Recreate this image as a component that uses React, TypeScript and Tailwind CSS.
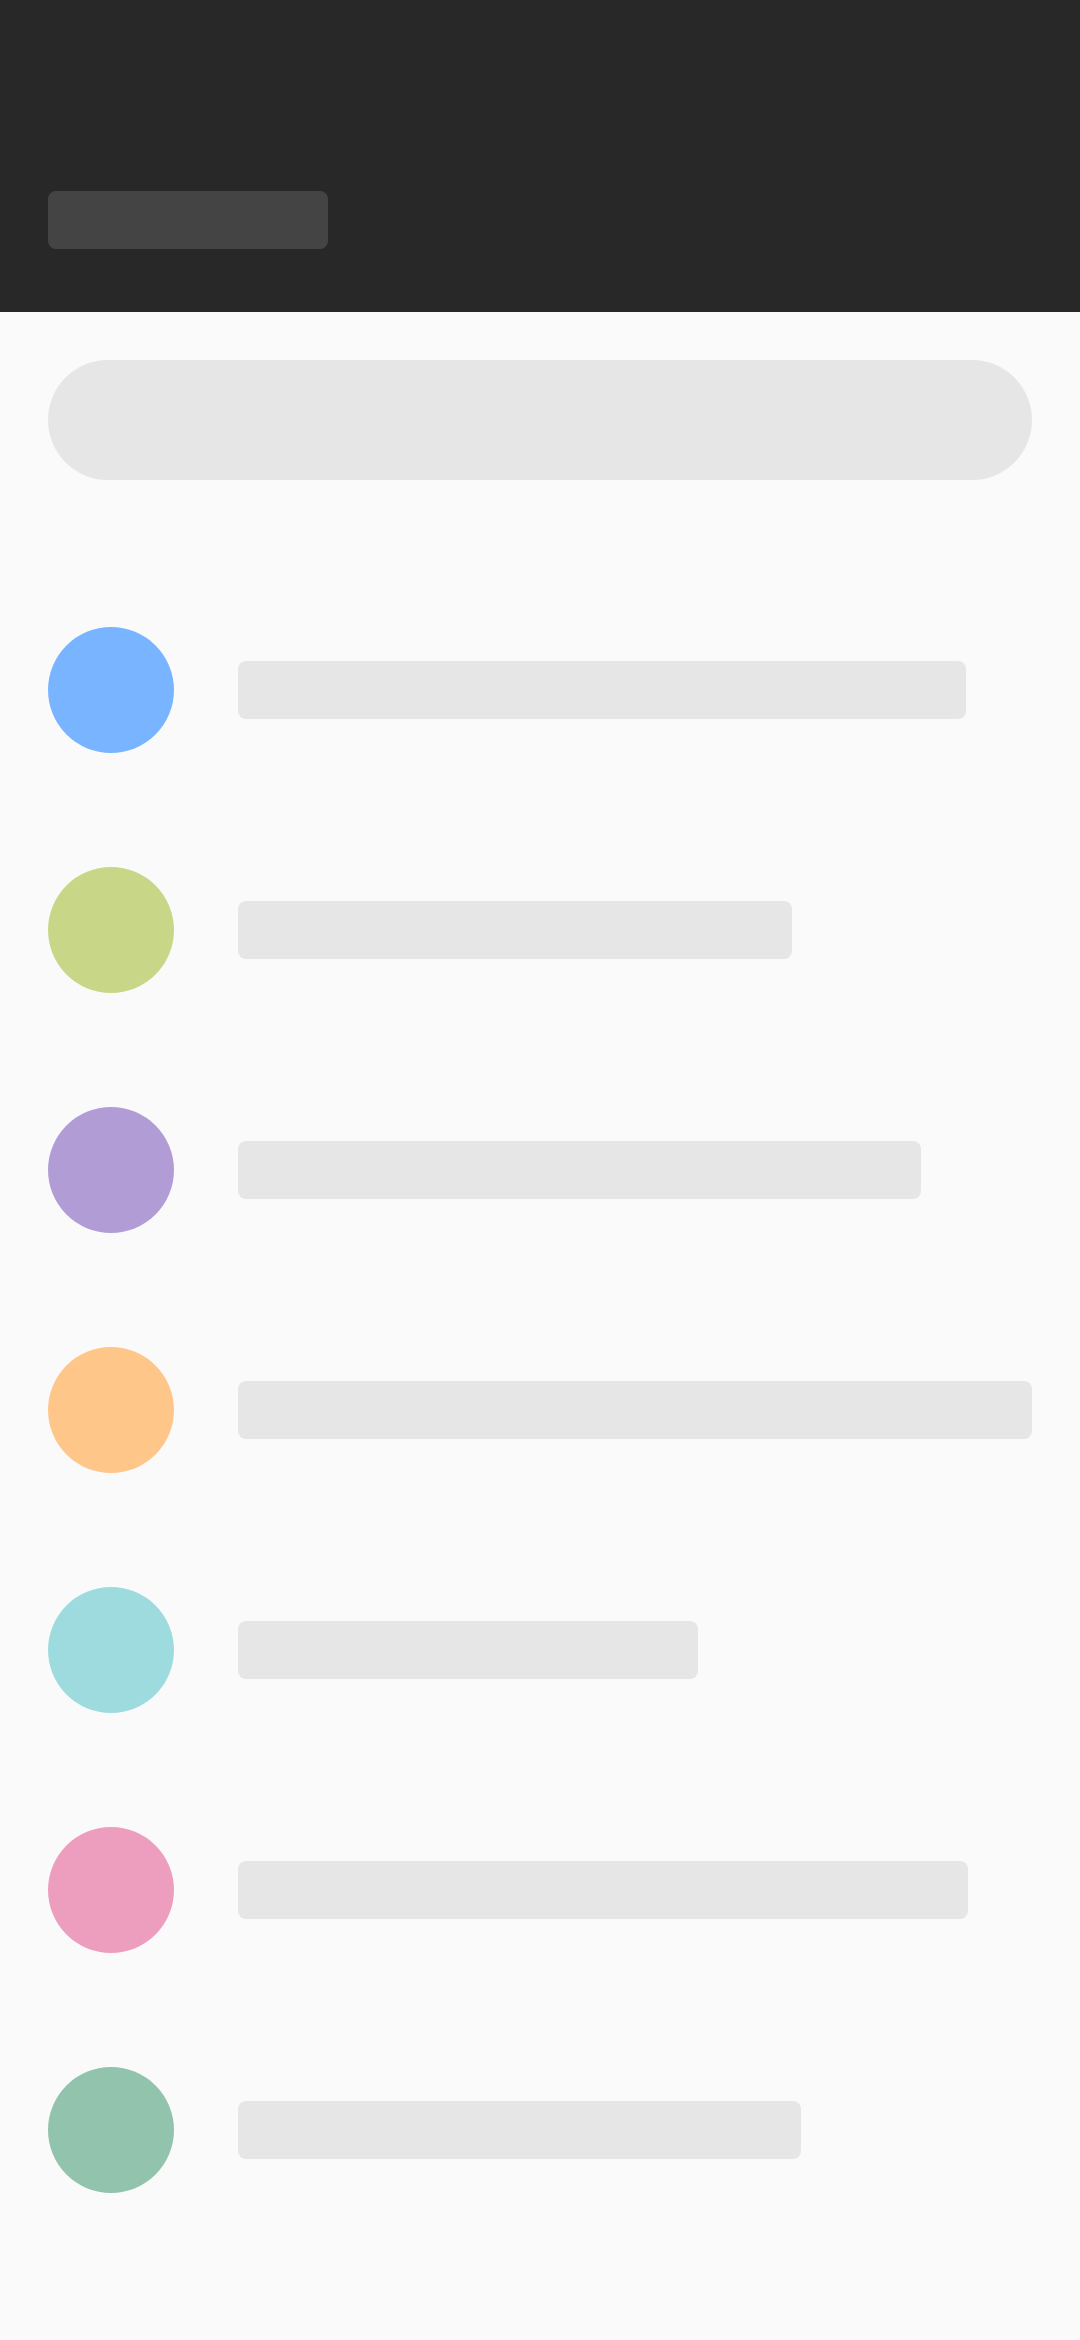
const rows = [
	{ color: "bg-[#78b4ff]", width: "w-[728px]" },
	{ color: "bg-[#c8d687]", width: "w-[554px]" },
	{ color: "bg-[#b19cd6]", width: "w-[683px]" },
	{ color: "bg-[#ffc68a]", width: "w-[794px]" },
	{ color: "bg-[#9edbde]", width: "w-[460px]" },
	{ color: "bg-[#ed9dbd]", width: "w-[730px]" },
	{ color: "bg-[#92c3ad]", width: "w-[563px]" }
];

export default function App() {
	return (
		<div className="w-[1080px] min-h-[2340px] bg-[#fafafa]">
			<div className="h-[312px] bg-[#282828] flex flex-col justify-end px-12 pb-[63px]">
				<div className="w-[280px] h-[58px] rounded-lg bg-[#444444]"></div>
			</div>
			<div className="px-12 pt-12">
				<div className="h-[120px] rounded-full bg-[#e6e6e6]"></div>
				<div className="mt-[90px] flex flex-col">
					{rows.map((row, i) => (
						<div key={i} className="h-[240px] flex items-center gap-16">
							<div className={`w-[126px] h-[126px] shrink-0 rounded-full ${row.color}`}></div>
							<div className={`h-[58px] rounded-lg bg-[#e6e6e6] ${row.width}`}></div>
						</div>
					))}
				</div>
			</div>
		</div>
	);
}
